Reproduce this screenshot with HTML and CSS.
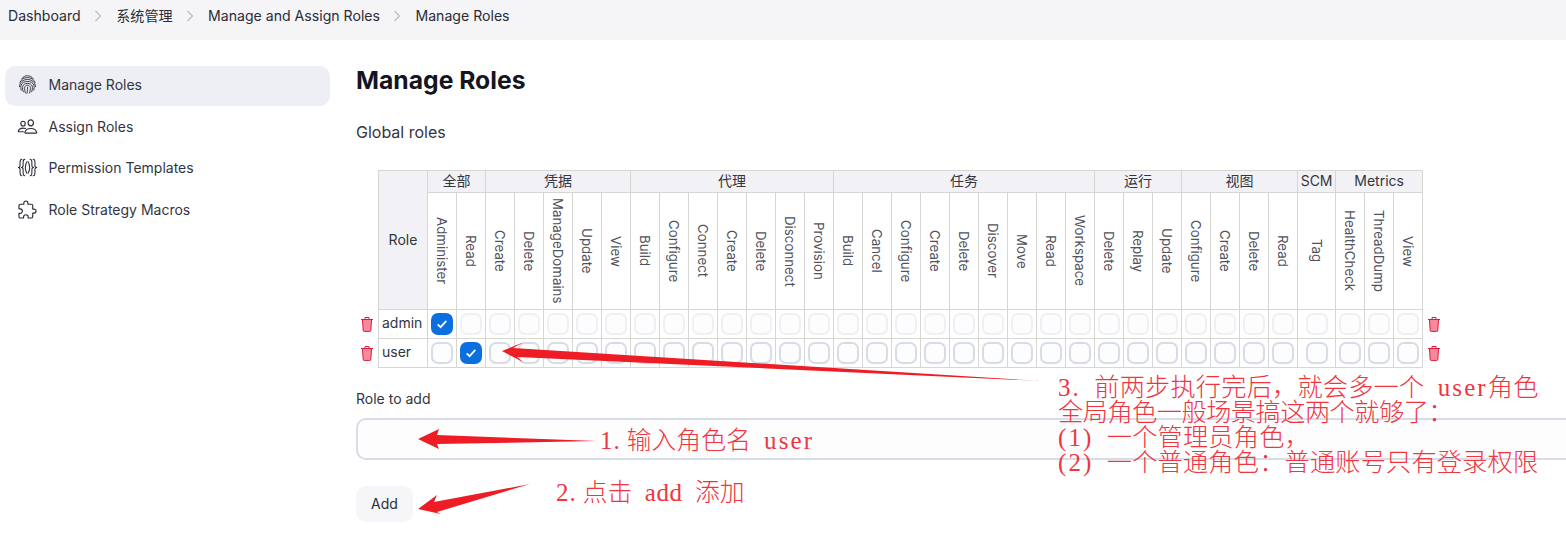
FILE: index.html
```html
<!DOCTYPE html>
<html lang="zh">
<head>
<meta charset="utf-8">
<title>Manage Roles</title>
<link rel="stylesheet" href="styles.css">
</head>
<body>
<nav class="crumbs">
  <a class="crumb">Dashboard</a><svg class="chev" viewBox="0 0 8 12"><path d="M1.5 1l5 5-5 5"/></svg>
  <a class="crumb">系统管理</a><svg class="chev" viewBox="0 0 8 12"><path d="M1.5 1l5 5-5 5"/></svg>
  <a class="crumb">Manage and Assign Roles</a><svg class="chev" viewBox="0 0 8 12"><path d="M1.5 1l5 5-5 5"/></svg>
  <a class="crumb">Manage Roles</a>
</nav>
<div class="page">
  <aside class="side">
    <a class="item active">
      <svg class="ico thin" viewBox="0 0 24 24"><path d="M5.500 5.200C7.200 3 9.500 2 12 2s4.800 1 6.500 3.200"/><path d="M3.300 9.500C4.800 6 8 4.100 12 4.100s7.200 1.900 8.700 5.400"/><path d="M2.800 14.500C3 9.500 7 6.300 12 6.300s9 3.200 9.200 8.200"/><path d="M4.800 18.500c-.5-2-.6-4-.2-5.700C5.500 10 8.500 8.500 12 8.500s6.500 1.500 7.400 4.300c.4 1.700.3 3.700-.2 5.700"/><path d="M7.200 20.300c-.7-2-1-4.300-.7-6C7 12 9.300 10.700 12 10.700s5 1.300 5.500 3.600c.3 1.700 0 4-.7 6"/><path d="M9.700 21.700c-.8-2-1.200-4.700-.9-6.500.2-1.500 1.600-2.400 3.200-2.400s3 .9 3.200 2.400c.3 1.800-.1 4.500-.9 6.500"/><path d="M12 15v2.500c0 1.500-.2 3-.6 4.500"/></svg>
      <span>Manage Roles</span>
    </a>
    <a class="item">
      <svg class="ico" viewBox="0 0 512 512"><path d="M402 168c-2.930 40.670-33.100 72-66 72s-63.120-31.320-66-72c-3-42.310 26.370-72 66-72s69 30.460 66 72z"/><path d="M336 304c-65.170 0-127.840 32.370-143.540 95.410-2.080 8.340 3.150 16.590 11.720 16.590h263.650c8.570 0 13.770-8.250 11.720-16.590C463.850 335.360 401.180 304 336 304z"/><path d="M200 185.940c-2.340 32.480-26.720 58.060-53 58.060s-50.700-25.570-53-58.060C91.610 152.150 115.340 128 147 128s55.390 24.770 53 57.940z"/><path d="M206 306c-18.050-8.270-37.930-11.450-59-11.450-52 0-102.100 25.850-114.650 76.200-1.650 6.660 2.530 13.250 9.370 13.250H154"/></svg>
      <span>Assign Roles</span>
    </a>
    <a class="item">
      <svg class="ico" viewBox="0 0 24 24"><path d="M5.500 2.500C3.800 2.500 3.500 4 3.500 6v3.500c0 1.500-.5 2.500-2 2.500 1.500 0 2 1 2 2.500V18c0 2 .3 3.500 2 3.500"/><path d="M9 2.500C7.300 2.500 7 4 7 6v3.500C7 11 6.500 12 5 12c1.500 0 2 1 2 2.500V18c0 2 .3 3.500 2 3.500"/><path d="M11.300 5.500C10 7.500 9.500 9.700 9.500 12s.5 4.500 1.800 6.500"/><path d="M12.700 5.500c1.300 2 1.800 4.200 1.800 6.500s-.5 4.500-1.800 6.500"/><path d="M15 2.500c1.700 0 2 1.500 2 3.500v3.500c0 1.500.5 2.500 2 2.500-1.500 0-2 1-2 2.500V18c0 2-.3 3.500-2 3.500"/><path d="M18.500 2.500c1.700 0 2 1.500 2 3.500v3.500c0 1.500.5 2.500 2 2.500-1.500 0-2 1-2 2.500V18c0 2-.3 3.500-2 3.500"/></svg>
      <span>Permission Templates</span>
    </a>
    <a class="item">
      <svg class="ico" viewBox="0 0 512 512"><path d="M413.660 246.100H386a2 2 0 01-2-2v-77.240A38.860 38.860 0 00345.140 128H267.900a2 2 0 01-2-2V98.340c0-27.140-21.500-49.860-48.640-50.330a49.530 49.530 0 00-50.400 49.510V126a2 2 0 01-2 2H87.620A39.740 39.740 0 0048 167.620V238a2 2 0 002 2h26.910c29.370 0 53.680 25.480 54.090 54.850.42 29.870-23.510 57.150-53.290 57.150H50a2 2 0 00-2 2v70.380A39.740 39.740 0 0087.620 464H158a2 2 0 002-2v-20.930c0-30.280 24.750-56.350 55-57.060 30.100-.7 57 20.310 57 50.280V462a2 2 0 002 2h71.140A38.860 38.860 0 00384 425.140v-78a2 2 0 012-2h28.480c27.630 0 49.520-22.670 49.520-50.400s-23.200-48.640-50.340-48.640z"/></svg>
      <span>Role Strategy Macros</span>
    </a>
  </aside>
  <main class="main">
    <h1 class="title">Manage Roles</h1>
    <h2 class="sub">Global roles</h2>
    <table class="grid">
      <colgroup>
        <col class="c-gut"><col class="c-role">
        <col class="c"><col class="c">
        <col class="c"><col class="c"><col class="c"><col class="c"><col class="c">
        <col class="c"><col class="c"><col class="c"><col class="c"><col class="c"><col class="c"><col class="c">
        <col class="c"><col class="c"><col class="c"><col class="c"><col class="c"><col class="c"><col class="c"><col class="c"><col class="c">
        <col class="c"><col class="c"><col class="c">
        <col class="c"><col class="c"><col class="c"><col class="c">
        <col class="c-scm">
        <col class="c"><col class="c"><col class="c">
        <col class="c-gut">
      </colgroup>
      <thead>
        <tr class="r-group">
          <th class="gut" rowspan="2"></th>
          <th class="role-h" rowspan="2">Role</th>
          <th colspan="2">全部</th><th colspan="5">凭据</th><th colspan="7">代理</th><th colspan="9">任务</th><th colspan="3">运行</th><th colspan="4">视图</th><th>SCM</th><th colspan="3">Metrics</th>
          <th class="gut" rowspan="2"></th>
        </tr>
        <tr class="r-perm">
          <th><span class="v">Administer</span></th><th><span class="v">Read</span></th>
          <th><span class="v">Create</span></th><th><span class="v">Delete</span></th><th><span class="v">ManageDomains</span></th><th><span class="v">Update</span></th><th><span class="v">View</span></th>
          <th><span class="v">Build</span></th><th><span class="v">Configure</span></th><th><span class="v">Connect</span></th><th><span class="v">Create</span></th><th><span class="v">Delete</span></th><th><span class="v">Disconnect</span></th><th><span class="v">Provision</span></th>
          <th><span class="v">Build</span></th><th><span class="v">Cancel</span></th><th><span class="v">Configure</span></th><th><span class="v">Create</span></th><th><span class="v">Delete</span></th><th><span class="v">Discover</span></th><th><span class="v">Move</span></th><th><span class="v">Read</span></th><th><span class="v">Workspace</span></th>
          <th><span class="v">Delete</span></th><th><span class="v">Replay</span></th><th><span class="v">Update</span></th>
          <th><span class="v">Configure</span></th><th><span class="v">Create</span></th><th><span class="v">Delete</span></th><th><span class="v">Read</span></th>
          <th><span class="v">Tag</span></th>
          <th><span class="v">HealthCheck</span></th><th><span class="v">ThreadDump</span></th><th><span class="v">View</span></th>
        </tr>
      </thead>
      <tbody>
        <tr class="r-data soft">
          <td class="gut"><svg class="trash" viewBox="0 0 14 16"><path class="t-fill" d="M2.500 4h9l-.7 10.500a1 1 0 01-1 .9H4.200a1 1 0 01-1-.9z"/><path d="M1 3.500h12M5 3.300V1.500h4v1.800M2.500 4l.7 10.500a1 1 0 001 .9h5.600a1 1 0 001-.9L11.500 4"/></svg></td>
          <td class="name">admin</td>
          <td><span class="cb on"><svg viewBox="0 0 12 12"><path d="M2.300 6.300l2.500 2.400 4.900-5.400"/></svg></span></td>
          <td><span class="cb"></span></td><td><span class="cb"></span></td><td><span class="cb"></span></td><td><span class="cb"></span></td><td><span class="cb"></span></td><td><span class="cb"></span></td>
          <td><span class="cb"></span></td><td><span class="cb"></span></td><td><span class="cb"></span></td><td><span class="cb"></span></td><td><span class="cb"></span></td><td><span class="cb"></span></td><td><span class="cb"></span></td>
          <td><span class="cb"></span></td><td><span class="cb"></span></td><td><span class="cb"></span></td><td><span class="cb"></span></td><td><span class="cb"></span></td><td><span class="cb"></span></td><td><span class="cb"></span></td><td><span class="cb"></span></td><td><span class="cb"></span></td>
          <td><span class="cb"></span></td><td><span class="cb"></span></td><td><span class="cb"></span></td>
          <td><span class="cb"></span></td><td><span class="cb"></span></td><td><span class="cb"></span></td><td><span class="cb"></span></td>
          <td><span class="cb"></span></td>
          <td><span class="cb"></span></td><td><span class="cb"></span></td><td><span class="cb"></span></td>
          <td class="gut"><svg class="trash" viewBox="0 0 14 16"><path class="t-fill" d="M2.500 4h9l-.7 10.500a1 1 0 01-1 .9H4.200a1 1 0 01-1-.9z"/><path d="M1 3.500h12M5 3.300V1.500h4v1.800M2.500 4l.7 10.500a1 1 0 001 .9h5.600a1 1 0 001-.9L11.500 4"/></svg></td>
        </tr>
        <tr class="r-data">
          <td class="gut"><svg class="trash" viewBox="0 0 14 16"><path class="t-fill" d="M2.500 4h9l-.7 10.500a1 1 0 01-1 .9H4.200a1 1 0 01-1-.9z"/><path d="M1 3.500h12M5 3.300V1.500h4v1.800M2.500 4l.7 10.500a1 1 0 001 .9h5.600a1 1 0 001-.9L11.500 4"/></svg></td>
          <td class="name">user</td>
          <td><span class="cb"></span></td>
          <td><span class="cb on"><svg viewBox="0 0 12 12"><path d="M2.300 6.300l2.500 2.400 4.900-5.400"/></svg></span></td>
          <td><span class="cb"></span></td><td><span class="cb"></span></td><td><span class="cb"></span></td><td><span class="cb"></span></td><td><span class="cb"></span></td>
          <td><span class="cb"></span></td><td><span class="cb"></span></td><td><span class="cb"></span></td><td><span class="cb"></span></td><td><span class="cb"></span></td><td><span class="cb"></span></td><td><span class="cb"></span></td>
          <td><span class="cb"></span></td><td><span class="cb"></span></td><td><span class="cb"></span></td><td><span class="cb"></span></td><td><span class="cb"></span></td><td><span class="cb"></span></td><td><span class="cb"></span></td><td><span class="cb"></span></td><td><span class="cb"></span></td>
          <td><span class="cb"></span></td><td><span class="cb"></span></td><td><span class="cb"></span></td>
          <td><span class="cb"></span></td><td><span class="cb"></span></td><td><span class="cb"></span></td><td><span class="cb"></span></td>
          <td><span class="cb"></span></td>
          <td><span class="cb"></span></td><td><span class="cb"></span></td><td><span class="cb"></span></td>
          <td class="gut"><svg class="trash" viewBox="0 0 14 16"><path class="t-fill" d="M2.500 4h9l-.7 10.500a1 1 0 01-1 .9H4.200a1 1 0 01-1-.9z"/><path d="M1 3.500h12M5 3.300V1.500h4v1.800M2.500 4l.7 10.500a1 1 0 001 .9h5.600a1 1 0 001-.9L11.500 4"/></svg></td>
        </tr>
      </tbody>
    </table>
    <label class="lbl" for="role">Role to add</label>
    <input class="field" id="role" type="text">
    <button class="btn" type="button">Add</button>
  </main>
</div>
<svg class="arrows" viewBox="0 0 1566 548">
  <polygon points="502,351 524,342 513,348 1041,381 517,357 523,362"/>
  <polygon points="418,439 439,429 437,435 597,441 437,444 439,449"/>
  <polygon points="418,509 437,495 434,502 530,484 437,512 441,514"/>
</svg>
<p class="note n1"><span class="m d">1.</span>输入角色名<span class="m"> user</span></p>
<p class="note n2"><span class="m d">2.</span>点击<span class="m tight"> add </span>添加</p>
<div class="note-block n3">
  <p class="note-line"><span class="m">3. </span>前两步执行完后&#xFF0C;就会多一个<span class="m"> user</span>角色</p>
  <p class="note-line narrow">全局角色一般场景搞这两个就够了&#xFF1A;</p>
  <p class="note-line"><span class="m">(1) </span>一个管理员角色&#xFF0C;</p>
  <p class="note-line"><span class="m">(2) </span>一个普通角色&#xFF1A;普通账号只有登录权限</p>
</div>
</body>
</html>
```
FILE: styles.css
```css
* { box-sizing: border-box; }
html, body { margin: 0; height: 548px; overflow: hidden; background: #fff; }
body {
  font-family: Inter, "Noto Sans CJK SC", sans-serif;
  font-size: 14px;
  color: #2a2c38;
  position: relative;
}
.crumbs {
  height: 40px;
  background: #f5f5f7;
  display: flex;
  align-items: center;
  padding: 0 0 8px 8px;
}
.crumb { line-height: 16px; font-size: 14.100px; }
.chev { width: 8px; height: 12px; margin: 0 14px 0 13.500px; fill: none; stroke: #b9bfca; stroke-width: 1.300; }
.page { display: flex; align-items: flex-start; }
.side {
  width: 325px;
  flex: none;
  margin: 26px 0 0 5px;
  display: flex;
  flex-direction: column;
  gap: 1.670px;
}
.item {
  height: 40px;
  border-radius: 10px;
  display: flex;
  align-items: center;
  gap: 10.500px;
  padding: 0 0 3px 12px;
  color: #33353f;
}
.item.active { background: #eeeff4; }
.ico { width: 21px; height: 21px; flex: none; fill: none; stroke: #2a2c38; stroke-width: 1.200; stroke-linecap: round; stroke-linejoin: round; }
.ico.thin { stroke-width: 1.050; }
.ico[viewBox="0 0 512 512"] { stroke-width: 28; }
.main { margin-left: 26px; flex: none; width: 1300px; }
.title { margin: 24px 0 0; font-size: 24.700px; line-height: 32px; font-weight: 700; color: #14151f; }
.sub { margin: 26px 0 0; font-size: 16px; line-height: 20px; font-weight: 400; color: #33353f; }
.grid { margin-top: 28px; border-collapse: separate; border-spacing: 0; table-layout: fixed; width: 1089px; color: #33353f; }
.c-gut { width: 22px; }
.c-role { width: 50px; }
.c { width: 29px; }
.c-scm { width: 38px; }
.grid th, .grid td { border: 0; border-right: 1px solid #d6d6d2; border-bottom: 1px solid #d6d6d2; padding: 0; font-weight: 400; text-align: center; }
.grid .r-group th { border-top: 1px solid #d6d6d2; background: #f2f2f6; line-height: 20px; padding-bottom: 1px; }
.grid .role-h, .grid .name { border-left: 1px solid #d6d6d2; }
.grid .role-h { background: #f2f2f6; }
.grid .r-group th.gut, .grid th.gut, .grid td.gut { border: 0; background: #fff; }
.grid td.gut { padding-bottom: 2px; }
.r-group { height: 23px; }
.r-perm { height: 117px; }
.v { writing-mode: vertical-rl; display: inline-block; line-height: 28px; font-size: 13.300px; vertical-align: middle; color: #50525c; }
.r-data { height: 29px; }
.grid .name { text-align: left; padding-left: 3px; padding-bottom: 4px; }
.cb { display: flex; width: 22px; height: 22px; margin: 0 auto; border-radius: 7px; border: 2px solid #d6dce8; background: #fdfdfe; align-items: center; justify-content: center; }
.soft .cb { border-color: #eef0f5; }
.cb.on, .soft .cb.on { background: #0b6fe0; border-color: #0b6fe0; }
.cb svg { width: 14px; height: 14px; fill: none; stroke: #fff; stroke-width: 1.500; }
.trash { display: block; width: 14px; height: 16px; margin: 0 auto; fill: none; stroke: #e0183c; stroke-width: 1; }
.trash .t-fill { fill: #f58a9c; stroke: none; }
.lbl { display: block; margin-top: 22px; line-height: 18px; color: #33353f; }
.field { display: block; margin-top: 10px; width: 1300px; height: 42px; border: 2px solid #d6dce8; border-radius: 10px; background: #fdfdfe; outline: 0; }
.btn { display: block; margin-top: 26px; width: 57px; height: 36px; border: 0; border-radius: 10px; background: #f6f6f8; font: inherit; color: #2a2c38; padding: 0 0 2px; }
.arrows { position: absolute; left: 0; top: 0; width: 1566px; height: 548px; fill: #ee1c25; }
.note, .note-block {
  position: absolute;
  margin: 0;
  font-family: "Noto Sans CJK SC", sans-serif;
  font-size: 24.800px;
  line-height: 25px;
  color: #f0353f;
  font-weight: 300;
}
.note-block { font-size: 25.200px; letter-spacing: .2px; }
.note, .note-line { white-space: pre; }
.note-line { margin: 0; height: 25px; }
.note-line.narrow { letter-spacing: -.5px; }
.m { font-family: "Liberation Serif", serif; font-size: 25px; letter-spacing: 2.100px; word-spacing: 5px; }
.m.d { letter-spacing: 1px; margin-right: 6px; }
.m.tight { letter-spacing: .5px; word-spacing: 5.750px; }
.n1 { left: 600px; top: 426px; }
.n2 { left: 556px; top: 478px; }
.n3 { left: 1058px; top: 373px; }
```
